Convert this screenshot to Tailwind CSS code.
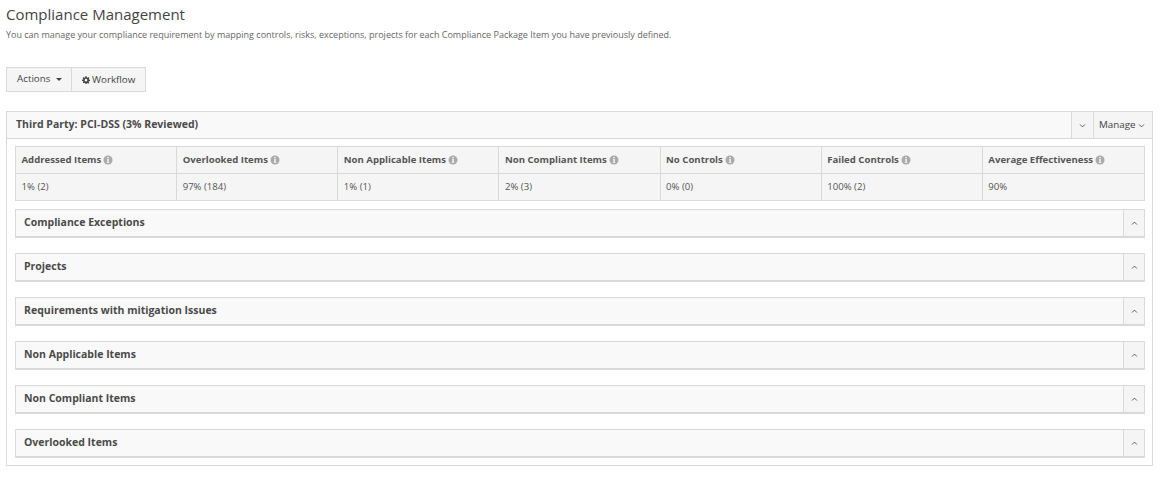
<!DOCTYPE html>
<html lang="en">
<head>
    <meta charset="UTF-8">
    <title>Compliance Management</title>
    <script src="https://cdn.jsdelivr.net/npm/@tailwindcss/browser@4"></script>
</head>
<body class="bg-white font-['Open_Sans',sans-serif] text-[#555] overflow-hidden">
    <div class="px-[6px] pt-[5px] w-[1160px] h-[486px]">
        <h1 class="text-[15px] leading-[18px] text-[#444]">Compliance Management</h1>
        <p class="mt-[6px] text-[9px] leading-[12px] text-[#666]">You can manage your compliance requirement by mapping controls, risks, exceptions, projects for each Compliance Package Item you have previously defined.</p>

        <!-- toolbar -->
        <div class="mt-[26px] flex h-[25px] text-[9.8px] text-[#444]">
            <button class="flex items-center w-[66px] pb-[1px] pl-[10px] bg-[#f5f5f5] border border-[#d9d9d9]">Actions
                <span class="ml-[6px] w-0 h-0 border-x-[3px] border-x-transparent border-t-[3px] border-t-[#444]"></span>
            </button>
            <button class="flex items-center w-[74px] pt-[1px] pl-[10px] bg-[#f5f5f5] border border-l-0 border-[#d9d9d9]">
                <svg class="w-[8px] h-[8px] mr-[2px]" viewBox="0 0 24 24" fill="#444"><path d="M10 1h4l.6 3.200 2 .8L19.300 3.200l2.800 2.800-1.800 2.700.8 2L24 11v4l-3.200.6-.8 2 1.800 2.700-2.800 2.800-2.700-1.800-2 .8L13.800 24h-3.600l-.6-3.200-2-.8-2.700 1.800-2.800-2.800 1.800-2.700-.8-2L0 15v-4l3.100-.3.800-2L2.100 6l2.800-2.800L7.600 5l2-.8zM12 8.500a4 4 0 1 0 0 8 4 4 0 0 0 0-8z" fill-rule="evenodd"/></svg>
                Workflow
            </button>
        </div>

        <!-- main panel -->
        <div class="mt-[19px] w-[1147px] h-[355px] border border-[#d9d9d9]">
            <div class="flex h-[27px] bg-[#f9f9f9] border-b border-[#d9d9d9]">
                <div class="flex-1 pl-[9px] text-[10.5px] font-bold leading-[25px] text-[#4a4a4a]">Third Party: PCI-DSS (3% Reviewed)</div>
                <div class="flex items-center justify-center w-[21px] bg-[#f5f5f5] border-l border-[#d9d9d9]">
                    <svg class="w-[7px] h-[7px]" viewBox="0 0 10 10" fill="none" stroke="#444" stroke-width="1.200"><path d="M1.500 3.500 5 7l3.500-3.500"/></svg>
                </div>
                <div class="flex items-center w-[59px] ml-px pt-[1px] pl-[5px] bg-[#f5f5f5] border-l border-[#d9d9d9] text-[9.8px] text-[#444]">Manage
                    <svg class="ml-[2px] w-[7px] h-[7px]" viewBox="0 0 10 10" fill="none" stroke="#444" stroke-width="1.200"><path d="M1.500 3.500 5 7l3.500-3.500"/></svg>
                </div>
            </div>

            <div class="pt-[7px] px-[8px]">
                <!-- stats table -->
                <div class="grid grid-cols-7 w-[1130px] h-[55px] border border-[#d9d9d9] bg-[#f5f5f5] text-[9.6px]">
                    <div class="flex flex-col border-r border-[#d9d9d9]">
                        <div class="flex items-center h-[27px] pl-[5.5px] font-bold border-b border-[#d9d9d9]">Addressed Items
                            <svg class="ml-[2px] w-[10px] h-[10px]" viewBox="0 0 10 10"><circle cx="5" cy="5" r="4.500" fill="#aaa"/><path d="M4.200 4h1.500v3h.6v.8H3.800V7h.6V4.800h-.2zM4.300 2h1.400v1.300H4.300z" fill="#fff"/></svg>
                        </div>
                        <div class="flex-1 flex items-center pl-[5.5px]">1% (2)</div>
                    </div>
                    <div class="flex flex-col border-r border-[#d9d9d9]">
                        <div class="flex items-center h-[27px] pl-[5.5px] font-bold border-b border-[#d9d9d9]">Overlooked Items
                            <svg class="ml-[2px] w-[10px] h-[10px]" viewBox="0 0 10 10"><circle cx="5" cy="5" r="4.500" fill="#aaa"/><path d="M4.200 4h1.500v3h.6v.8H3.800V7h.6V4.800h-.2zM4.300 2h1.400v1.300H4.300z" fill="#fff"/></svg>
                        </div>
                        <div class="flex-1 flex items-center pl-[5.5px]">97% (184)</div>
                    </div>
                    <div class="flex flex-col border-r border-[#d9d9d9]">
                        <div class="flex items-center h-[27px] pl-[5.5px] font-bold border-b border-[#d9d9d9]">Non Applicable Items
                            <svg class="ml-[2px] w-[10px] h-[10px]" viewBox="0 0 10 10"><circle cx="5" cy="5" r="4.500" fill="#aaa"/><path d="M4.200 4h1.500v3h.6v.8H3.800V7h.6V4.800h-.2zM4.300 2h1.400v1.300H4.300z" fill="#fff"/></svg>
                        </div>
                        <div class="flex-1 flex items-center pl-[5.5px]">1% (1)</div>
                    </div>
                    <div class="flex flex-col border-r border-[#d9d9d9]">
                        <div class="flex items-center h-[27px] pl-[5.5px] font-bold border-b border-[#d9d9d9]">Non Compliant Items
                            <svg class="ml-[2px] w-[10px] h-[10px]" viewBox="0 0 10 10"><circle cx="5" cy="5" r="4.500" fill="#aaa"/><path d="M4.200 4h1.500v3h.6v.8H3.800V7h.6V4.800h-.2zM4.300 2h1.400v1.300H4.300z" fill="#fff"/></svg>
                        </div>
                        <div class="flex-1 flex items-center pl-[5.5px]">2% (3)</div>
                    </div>
                    <div class="flex flex-col border-r border-[#d9d9d9]">
                        <div class="flex items-center h-[27px] pl-[5.5px] font-bold border-b border-[#d9d9d9]">No Controls
                            <svg class="ml-[2px] w-[10px] h-[10px]" viewBox="0 0 10 10"><circle cx="5" cy="5" r="4.500" fill="#aaa"/><path d="M4.200 4h1.500v3h.6v.8H3.800V7h.6V4.800h-.2zM4.300 2h1.400v1.300H4.300z" fill="#fff"/></svg>
                        </div>
                        <div class="flex-1 flex items-center pl-[5.5px]">0% (0)</div>
                    </div>
                    <div class="flex flex-col border-r border-[#d9d9d9]">
                        <div class="flex items-center h-[27px] pl-[5.5px] font-bold border-b border-[#d9d9d9]">Failed Controls
                            <svg class="ml-[2px] w-[10px] h-[10px]" viewBox="0 0 10 10"><circle cx="5" cy="5" r="4.500" fill="#aaa"/><path d="M4.200 4h1.500v3h.6v.8H3.800V7h.6V4.800h-.2zM4.300 2h1.400v1.300H4.300z" fill="#fff"/></svg>
                        </div>
                        <div class="flex-1 flex items-center pl-[5.5px]">100% (2)</div>
                    </div>
                    <div class="flex flex-col">
                        <div class="flex items-center h-[27px] pl-[5.5px] font-bold border-b border-[#d9d9d9]">Average Effectiveness
                            <svg class="ml-[2px] w-[10px] h-[10px]" viewBox="0 0 10 10"><circle cx="5" cy="5" r="4.500" fill="#aaa"/><path d="M4.200 4h1.500v3h.6v.8H3.800V7h.6V4.800h-.2zM4.300 2h1.400v1.300H4.300z" fill="#fff"/></svg>
                        </div>
                        <div class="flex-1 flex items-center pl-[5.5px]">90%</div>
                    </div>
                </div>

                <!-- collapsible sections -->
                <div class="mt-[8px] flex flex-col gap-[15px] w-[1130px]">
                    <div class="flex h-[29px] bg-[#f9f9f9] border border-[#d9d9d9] border-b-[2px]">
                        <div class="flex-1 pl-[8px] text-[10.5px] font-bold leading-[24px] text-[#4a4a4a]">Compliance Exceptions</div>
                        <div class="flex items-center justify-center w-[21px] bg-[#f5f5f5] border-l border-[#d9d9d9]"><svg class="w-[7px] h-[7px]" viewBox="0 0 10 10" fill="none" stroke="#444" stroke-width="1.200"><path d="M1.500 6.500 5 3l3.500 3.500"/></svg></div>
                    </div>
                    <div class="flex h-[29px] bg-[#f9f9f9] border border-[#d9d9d9] border-b-[2px]">
                        <div class="flex-1 pl-[8px] text-[10.5px] font-bold leading-[24px] text-[#4a4a4a]">Projects</div>
                        <div class="flex items-center justify-center w-[21px] bg-[#f5f5f5] border-l border-[#d9d9d9]"><svg class="w-[7px] h-[7px]" viewBox="0 0 10 10" fill="none" stroke="#444" stroke-width="1.200"><path d="M1.500 6.500 5 3l3.500 3.500"/></svg></div>
                    </div>
                    <div class="flex h-[29px] bg-[#f9f9f9] border border-[#d9d9d9] border-b-[2px]">
                        <div class="flex-1 pl-[8px] text-[10.5px] font-bold leading-[24px] text-[#4a4a4a]">Requirements with mitigation Issues</div>
                        <div class="flex items-center justify-center w-[21px] bg-[#f5f5f5] border-l border-[#d9d9d9]"><svg class="w-[7px] h-[7px]" viewBox="0 0 10 10" fill="none" stroke="#444" stroke-width="1.200"><path d="M1.500 6.500 5 3l3.500 3.500"/></svg></div>
                    </div>
                    <div class="flex h-[29px] bg-[#f9f9f9] border border-[#d9d9d9] border-b-[2px]">
                        <div class="flex-1 pl-[8px] text-[10.5px] font-bold leading-[24px] text-[#4a4a4a]">Non Applicable Items</div>
                        <div class="flex items-center justify-center w-[21px] bg-[#f5f5f5] border-l border-[#d9d9d9]"><svg class="w-[7px] h-[7px]" viewBox="0 0 10 10" fill="none" stroke="#444" stroke-width="1.200"><path d="M1.500 6.500 5 3l3.500 3.500"/></svg></div>
                    </div>
                    <div class="flex h-[29px] bg-[#f9f9f9] border border-[#d9d9d9] border-b-[2px]">
                        <div class="flex-1 pl-[8px] text-[10.5px] font-bold leading-[24px] text-[#4a4a4a]">Non Compliant Items</div>
                        <div class="flex items-center justify-center w-[21px] bg-[#f5f5f5] border-l border-[#d9d9d9]"><svg class="w-[7px] h-[7px]" viewBox="0 0 10 10" fill="none" stroke="#444" stroke-width="1.200"><path d="M1.500 6.500 5 3l3.500 3.500"/></svg></div>
                    </div>
                    <div class="flex h-[29px] bg-[#f9f9f9] border border-[#d9d9d9] border-b-[2px]">
                        <div class="flex-1 pl-[8px] text-[10.5px] font-bold leading-[24px] text-[#4a4a4a]">Overlooked Items</div>
                        <div class="flex items-center justify-center w-[21px] bg-[#f5f5f5] border-l border-[#d9d9d9]"><svg class="w-[7px] h-[7px]" viewBox="0 0 10 10" fill="none" stroke="#444" stroke-width="1.200"><path d="M1.500 6.500 5 3l3.500 3.500"/></svg></div>
                    </div>
                </div>
            </div>
        </div>
    </div>
</body>
</html>
